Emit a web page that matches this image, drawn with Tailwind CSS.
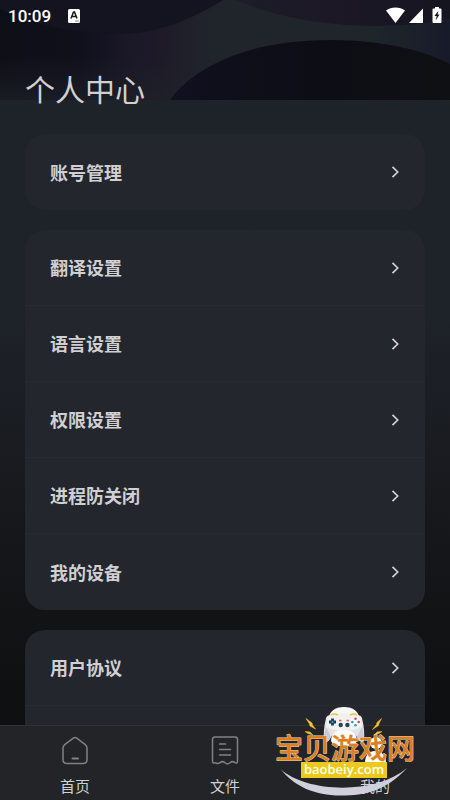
<!DOCTYPE html>
<html lang="zh-CN">

<head>
    <meta charset="UTF-8">
    <meta name="viewport" content="width=device-width, initial-scale=1.0">
    <title>个人中心</title>
    <script src="https://cdn.jsdelivr.net/npm/@tailwindcss/browser@4"></script>
</head>

<body class="font-['Noto_Sans_CJK_SC',sans-serif] bg-[#0d0e10]">
    <div class="relative flex flex-col h-screen overflow-hidden bg-linear-to-b from-[#1e2229] from-40% via-[#131416] via-75% to-[#0b0c0d] text-[#d0d0d2]">

        <!-- Header artwork -->
        <svg class="absolute top-0 left-0 w-full h-[100px]" viewBox="0 0 450 100" preserveAspectRatio="none" aria-hidden="true">
            <defs>
                <linearGradient id="sky" x1="0" x2="1" y1="0" y2="0">
                    <stop offset="0" stop-color="#0e0f16" />
                    <stop offset=".18" stop-color="#10101c" />
                    <stop offset=".28" stop-color="#1a1727" />
                    <stop offset=".36" stop-color="#1e1a28" />
                    <stop offset=".43" stop-color="#1f222a" />
                    <stop offset=".5" stop-color="#20252b" />
                    <stop offset=".83" stop-color="#1f252b" />
                    <stop offset="1" stop-color="#171b29" />
                </linearGradient>
                <linearGradient id="fade" x1="0" x2="0" y1="0" y2="1">
                    <stop offset=".55" stop-color="#1e2229" stop-opacity="0" />
                    <stop offset="1" stop-color="#1e2229" stop-opacity=".65" />
                </linearGradient>
                <linearGradient id="blob" x1="0" x2="1" y1="0" y2="0">
                    <stop offset="0" stop-color="#10101f" />
                    <stop offset=".55" stop-color="#0d0d15" />
                    <stop offset="1" stop-color="#0f1014" />
                </linearGradient>
                <linearGradient id="right" x1="0" x2="1" y1="0" y2="0">
                    <stop offset="0" stop-color="#1b1d28" />
                    <stop offset=".4" stop-color="#1d1826" />
                    <stop offset="1" stop-color="#151520" />
                </linearGradient>
            </defs>
            <rect width="450" height="100" fill="url(#sky)" />
            <rect width="230" height="100" fill="url(#fade)" />
            <path d="M0 0H223C190 20 160 33 120 34C75 34 35 25 0 9Z" fill="#13141f" />
            <path d="M235 0C275 17 325 26 375 26C405 26 430 23 450 19V0Z" fill="url(#right)" />
            <path d="M170 100C190 72 240 40 330 40C385 40 425 51 450 64V100Z" fill="url(#blob)" />
        </svg>

        <!-- Status bar -->
        <header class="relative flex items-center justify-between h-8 px-2 text-white shrink-0">
            <div class="flex items-center gap-[17px]">
                <span class="font-[Roboto,sans-serif] font-medium text-[17px] leading-8">10:09</span>
                <svg class="w-3 h-[14px]" viewBox="0 0 12 14" aria-hidden="true">
                    <rect width="12" height="14" rx="1.500" fill="#fff" />
                    <path d="M3 9.500L5.500 3h1L9 9.500M4 7.500h4" fill="none" stroke="#15161f" stroke-width="1.500" />
                    <path d="M7 12h4" stroke="#888" stroke-width="1" />
                </svg>
            </div>
            <svg class="w-[58px] h-[18px]" viewBox="0 0 58 18" fill="#fff" aria-hidden="true">
                <path d="M2 3.500C7 -.5 16 -.5 21 3.500L11.500 16Z" />
                <path d="M39 1.500V16H25Z" />
                <path d="M51 0h4v1.500h1.500q1 0 1 1V15q0 1-1 1h-7q-1 0-1-1V2.500q0-1 1-1H51Z" />
                <path d="M54.500 3.500L50.500 9h2.200l-1 4.500L55.500 7.500h-2Z" fill="#11131a" />
            </svg>
        </header>

        <main class="relative flex-1 min-h-0 overflow-hidden px-[25px]">
            <h1 class="mt-[30px] h-[52px] leading-[52px] text-[30px] font-normal">个人中心</h1>

            <div class="mt-5 flex flex-col gap-5 text-[18px] font-bold">
                <section class="rounded-[20px] bg-[#23262d]">
                    <button type="button" class="flex items-center justify-between w-full h-[76px] px-[25px]">账号管理
                        <svg class="w-[10px] h-3" viewBox="0 0 10 12" fill="none" stroke="currentColor" stroke-width="1.700"><path d="M2.500 .8L7.700 6l-5.200 5.200" /></svg>
                    </button>
                </section>

                <section class="rounded-[20px] bg-[#23262d] divide-y divide-[#282a31]">
                    <button type="button" class="flex items-center justify-between w-full h-[76px] px-[25px]">翻译设置
                        <svg class="w-[10px] h-3" viewBox="0 0 10 12" fill="none" stroke="currentColor" stroke-width="1.700"><path d="M2.500 .8L7.700 6l-5.200 5.200" /></svg>
                    </button>
                    <button type="button" class="flex items-center justify-between w-full h-[76px] px-[25px]">语言设置
                        <svg class="w-[10px] h-3" viewBox="0 0 10 12" fill="none" stroke="currentColor" stroke-width="1.700"><path d="M2.500 .8L7.700 6l-5.200 5.200" /></svg>
                    </button>
                    <button type="button" class="flex items-center justify-between w-full h-[76px] px-[25px]">权限设置
                        <svg class="w-[10px] h-3" viewBox="0 0 10 12" fill="none" stroke="currentColor" stroke-width="1.700"><path d="M2.500 .8L7.700 6l-5.200 5.200" /></svg>
                    </button>
                    <button type="button" class="flex items-center justify-between w-full h-[76px] px-[25px]">进程防关闭
                        <svg class="w-[10px] h-3" viewBox="0 0 10 12" fill="none" stroke="currentColor" stroke-width="1.700"><path d="M2.500 .8L7.700 6l-5.200 5.200" /></svg>
                    </button>
                    <button type="button" class="flex items-center justify-between w-full h-[76px] px-[25px]">我的设备
                        <svg class="w-[10px] h-3" viewBox="0 0 10 12" fill="none" stroke="currentColor" stroke-width="1.700"><path d="M2.500 .8L7.700 6l-5.200 5.200" /></svg>
                    </button>
                </section>

                <section class="rounded-t-[20px] bg-[#23262d]">
                    <button type="button" class="flex items-center justify-between w-full h-[76px] px-[25px] border-b border-[#282a31]">用户协议
                        <svg class="w-[10px] h-3" viewBox="0 0 10 12" fill="none" stroke="currentColor" stroke-width="1.700"><path d="M2.500 .8L7.700 6l-5.200 5.200" /></svg>
                    </button>
                    <div class="h-[76px]"></div>
                </section>
            </div>
        </main>

        <!-- Tab bar -->
        <nav class="relative grid grid-cols-3 h-[75px] shrink-0 bg-[#232427] border-t border-[#303134] text-[15px]">
            <a href="#home" class="flex flex-col items-center pt-2">
                <svg class="w-8 h-8" viewBox="0 0 32 32" fill="none" stroke="#808184" stroke-width="1.500" stroke-linecap="round" stroke-linejoin="round">
                    <path d="M14.300 4.100Q16 2.900 17.700 4.100L26 10.300Q28 11.800 28 14V25.500Q28 29.500 24 29.500H8Q4 29.500 4 25.500V14Q4 11.800 6 10.300Z" />
                    <path d="M13.500 24.500h5.500" stroke-width="2" />
                </svg>
                <span class="mt-2 leading-6">首页</span>
            </a>
            <a href="#files" class="flex flex-col items-center pt-2">
                <svg class="w-8 h-8" viewBox="0 0 32 32" fill="none" stroke="#808184" stroke-width="1.500" stroke-linecap="round" stroke-linejoin="round">
                    <path d="M3.500 27V5.500Q3.500 3 6 3H26Q28.500 3 28.500 5.500V27Q28.500 30 26 28.700Q23.500 26.500 21 28.700Q18.500 30.800 16 28.700Q13.500 26.500 11 28.700Q8.500 30.500 6 28.700Q3.500 30 3.500 27Z" />
                    <path d="M10.500 10h6M10.500 15.500h11M10.500 21h11" />
                </svg>
                <span class="mt-2 leading-6">文件</span>
            </a>
            <a href="#me" class="flex flex-col items-center pt-2" aria-current="page">
                <svg class="w-8 h-8" viewBox="0 0 32 32" fill="#fff">
                    <circle cx="17" cy="9" r="6" />
                    <path d="M6 29C6 21 10 17 16 17S27 21 27 29Z" />
                </svg>
                <span class="mt-2 leading-6">我的</span>
            </a>
        </nav>

        <!-- Site badge, floats over the tab bar -->
        <svg class="absolute right-[30px] bottom-0 w-[150px] h-[100px] pointer-events-none" viewBox="270 700 150 100" role="img" aria-label="宝贝游戏网">
            <path d="M280.500 769C305 792 374 796 407 768C386 791 365 795.500 341 795.500C314 795.500 294 786 280.500 769Z" fill="#cfd0dc" />
            <!-- gamepad -->
            <path d="M328 720Q330 707 344 707T360 720Z" fill="#f6f6f3" />
            <path d="M326 718Q327 715 331 715L344 717L357 715Q361 715 362 718Q365 730 364 741Q360 744 357 737Q354 731 344 731T331 737Q328 744 324 741Q323 730 326 718Z" fill="#e2e2e7" />
            <path d="M327 717Q344 709 361 717L362 727Q353 731 344 731T326 727Z" fill="#f1f1f2" />
            <path d="M324.500 741Q324 732 326 727L331 737Q328 743 324.500 741ZM363.500 741Q364 732 362 727L357 737Q360 743 363.500 741Z" fill="#c9cad6" />
            <path d="M331 741Q331 730 344 730T357 741L354 746H334Z" fill="#fffdf8" />
            <path d="M331 715q3-2 7 0M350 715q4-2 7 0" fill="none" stroke="#edc342" stroke-width="1.500" />
            <path d="M332.500 718.500v7M329 722h7" stroke="#173c55" stroke-width="2.800" />
            <circle cx="332.500" cy="722" r="1" fill="#53b6cf" />
            <circle cx="355.500" cy="722" r="5" fill="#fff" />
            <circle cx="355.500" cy="718.800" r="1.300" fill="#e03f50" />
            <circle cx="358.700" cy="722" r="1.300" fill="#e03f50" />
            <circle cx="352.300" cy="722" r="1.300" fill="#239cb7" />
            <circle cx="355.500" cy="725.300" r="1.300" fill="#239cb7" />
            <circle cx="340.700" cy="725" r="2.200" fill="#234657" />
            <circle cx="347.400" cy="725" r="2.200" fill="#234657" />
            <path d="M339 720.500h2.500M346.500 720.500h2.500" stroke="#e75a66" stroke-width="1.300" />
            <!-- sparks -->
            <path d="M306 718.500L312 723l.5 2 3 4-5.500-3-.5-2Z M381.500 718.500L377 722.500l-.5 2-4 5 6-4 .5-2Z M305 731.500l5 .5 3 3-5-1.500Z M382 731.500l-5 .5-3 3 5-1.500Z" fill="#f1cf32" stroke="#e5a12e" stroke-width=".7" />
            <text x="275" y="759" font-size="28" font-weight="500" fill="#dd7f1c" stroke="#eadcc8" stroke-width=".9" stroke-linejoin="round" paint-order="stroke">宝贝游戏网</text>
            <rect x="301" y="762" width="86" height="16" fill="#edc91d" />
            <text x="344" y="774" text-anchor="middle" font-family="Open Sans, sans-serif" font-size="13" font-weight="600" fill="#fffef2">baobeiy.com</text>
        </svg>
    </div>
</body>

</html>
